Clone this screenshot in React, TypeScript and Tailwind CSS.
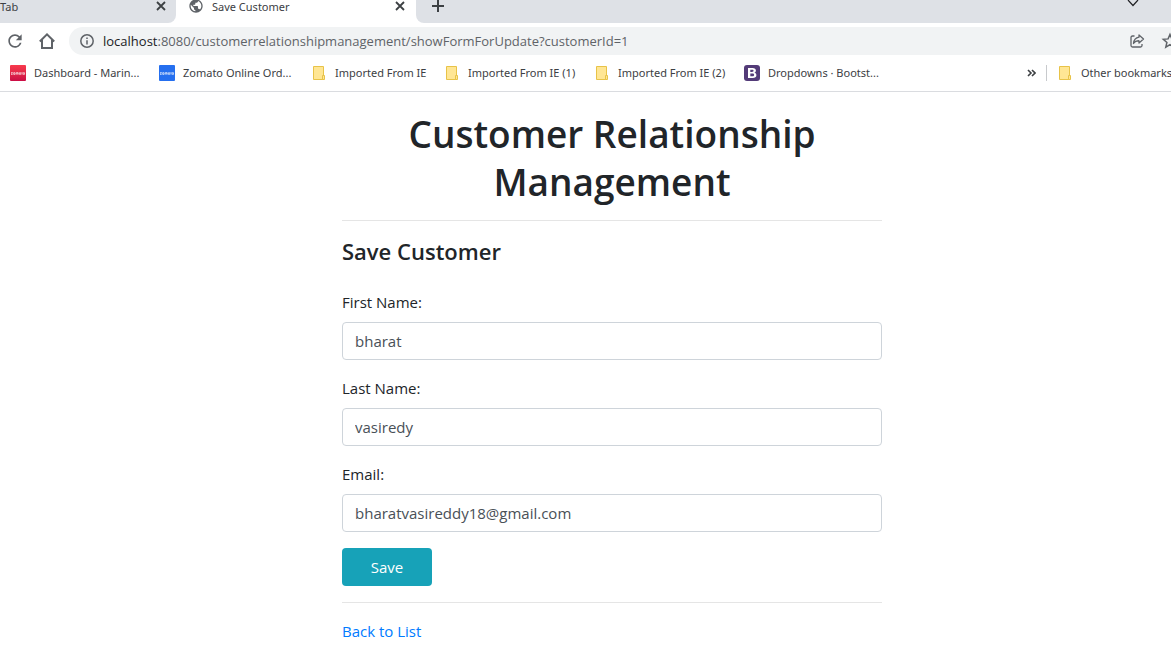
import type { ReactNode } from "react";
import { MdPublic, MdRefresh } from "react-icons/md";

function CloseIcon() {
  return (
    <svg width="10" height="10" viewBox="0 0 10 10" stroke="#3c4043" strokeWidth="1.8" fill="none">
      <path d="M1 1l8 8M9 1L1 9" />
    </svg>
  );
}

function FolderIcon() {
  return (
    <svg width="15" height="16" viewBox="0 0 15 16" fill="#ffe694" stroke="#e8c348" className="shrink-0">
      <path d="M1.5 1.5h10v13h-10z" />
      <path d="M10.5 10.5h2v4h-2z" />
    </svg>
  );
}

function ZomatoIcon({ className }: { className: string }) {
  return (
    <span className={`flex h-4 w-4 items-center justify-center rounded-[1px] ${className}`}>
      <svg width="14" height="3" viewBox="0 0 14 3" fill="none" stroke="#fff" strokeWidth=".7">
        <path
          d="M0 .6h1.600L0 2.400h1.700M2.700.7h1.300v1.700H2.700zM5.200 2.600V.7h2v1.900M6.200.7v1.900M8.400.7h1.300v1.700H8.400zM11 0v2.600M12.200.7h1.300v1.700h-1.300z"
          opacity=".9"
        />
      </svg>
    </span>
  );
}

function BootstrapIcon() {
  return (
    <svg width="16" height="16" viewBox="0 0 16 16">
      <rect width="16" height="16" rx="3" fill="#533b78" />
      <path
        fill="#fff"
        fillRule="evenodd"
        d="M4 3h4.600c2.100 0 3.300 1 3.300 2.600 0 1.100-.6 1.900-1.600 2.200 1.300.2 2.100 1.100 2.100 2.400 0 1.800-1.400 2.800-3.700 2.800H4zm2.300 1.700v2.300h1.700c1.100 0 1.600-.4 1.600-1.150S9.100 4.700 8.100 4.700zm0 3.900v2.600h2c1.200 0 1.800-.5 1.800-1.300s-.6-1.300-1.900-1.300z"
      />
    </svg>
  );
}

function Bookmark({ icon, className, children }: { icon: ReactNode; className: string; children: ReactNode }) {
  return (
    <a href="#" className={`flex shrink-0 items-center gap-2 whitespace-nowrap ${className}`}>
      {icon}
      {children}
    </a>
  );
}

function Field({ id, label, value, type = "text" }: { id: string; label: string; value: string; type?: string }) {
  return (
    <div className="mb-4">
      <label htmlFor={id} className="mb-2 block">
        {label}
      </label>
      <input
        id={id}
        type={type}
        defaultValue={value}
        className="block h-[38px] w-full rounded border border-[#ced4da] bg-white px-3 text-[#495057] outline-none"
      />
    </div>
  );
}

function BrowserChrome() {
  return (
    <header className="overflow-hidden border-b border-[#dadce0] font-['Noto_Sans','Open_Sans',sans-serif] text-[11px] leading-[14px] text-[#3c4043]">
      <div className="flex h-[23px]">
        <div className="flex w-44 shrink-0 items-start justify-between rounded-br-lg bg-[#dee1e6] pr-2.5">
          <span>Tab</span>
          <button aria-label="Close Tab" className="mt-px">
            <CloseIcon />
          </button>
        </div>
        <div className="flex w-60 shrink-0 items-start pr-[11px] pl-3">
          <MdPublic size={16} color="#5f6368" className="-mt-0.5 mr-2" />
          <span className="grow">Save Customer</span>
          <button aria-label="Close Save Customer" className="mt-px">
            <CloseIcon />
          </button>
        </div>
        <div className="flex grow items-start justify-between rounded-bl-lg bg-[#dee1e6] pr-8 pl-4">
          <button aria-label="New tab">
            <svg width="12" height="12" viewBox="0 0 12 12" stroke="#3c4043" strokeWidth="2" fill="none">
              <path d="M6 0v12M0 6h12" />
            </svg>
          </button>
          <button aria-label="Search tabs">
            <svg width="12" height="7" viewBox="0 0 12 7" stroke="#202124" strokeWidth="1.2" fill="none">
              <path d="M1 0l5 5.500L11 0" />
            </svg>
          </button>
        </div>
      </div>

      <div className="flex items-center pt-1 pl-[5px]">
        <button aria-label="Reload">
          <MdRefresh size={20} color="#5f6368" />
        </button>
        <button aria-label="Home" className="ml-3.5">
          <svg width="16" height="16" viewBox="0 0 16 16" stroke="#5f6368" strokeWidth="2" fill="none">
            <path d="M0.800 8.500L8 1.400l7.200 7.100M3 7v8h10V7" />
          </svg>
        </button>
        <div className="ml-3.5 flex h-7 grow items-center rounded-l-full bg-[#f1f3f4] pl-2.5">
          <svg width="16" height="16" viewBox="0 0 16 16" stroke="#5f6368" strokeWidth="1.500" fill="none">
            <circle cx="8" cy="8" r="6.200" />
            <path d="M8 7.200v4.200M8 4.500v1.500" />
          </svg>
          <span className="ml-2 grow font-['Open_Sans','Noto_Sans',sans-serif] text-[13px] leading-5 whitespace-nowrap text-[#5f6368]">
            <span className="text-[#202124]">localhost</span>
            :8080/customerrelationshipmanagement/showFormForUpdate?customerId=1
          </span>
          <button aria-label="Share" className="shrink-0">
            <svg width="16" height="16" viewBox="0 0 16 16" stroke="#5f6368" strokeWidth="1.300" fill="none">
              <path d="M5.500 3H3.500Q2 3 2 4.500v8Q2 14 3.500 14h8q1.500 0 1.500-1.500V11" />
              <path d="M10 2l4.500 4L10 10V7.800Q6.500 7.500 4.500 10.500 5 5 10 4.200z" strokeLinejoin="round" />
            </svg>
          </button>
          <button aria-label="Bookmark this page" className="-mr-2 ml-4 shrink-0">
            <svg width="18" height="18" viewBox="0 0 18 18" stroke="#5f6368" strokeWidth="1.500" fill="none">
              <path d="M9 2.500l1.900 4.400 4.800.4-3.600 3.200 1.100 4.700L9 12.700l-4.200 2.500 1.100-4.700L2.300 7.300l4.800-.4z" />
            </svg>
          </button>
        </div>
      </div>

      <nav aria-label="Bookmarks" className="flex h-9 items-center pl-2.5">
        <Bookmark className="w-[149px]" icon={<ZomatoIcon className="bg-linear-to-b from-[#f83a4c] to-[#cb0c45]" />}>
          Dashboard - Marin...
        </Bookmark>
        <Bookmark className="w-[153px]" icon={<ZomatoIcon className="bg-[#256fef]" />}>
          Zomato Online Ord...
        </Bookmark>
        <Bookmark className="w-[133px]" icon={<FolderIcon />}>
          Imported From IE
        </Bookmark>
        <Bookmark className="w-[150px]" icon={<FolderIcon />}>
          Imported From IE (1)
        </Bookmark>
        <Bookmark className="w-[149px]" icon={<FolderIcon />}>
          Imported From IE (2)
        </Bookmark>
        <Bookmark className="grow" icon={<BootstrapIcon />}>
          Dropdowns · Bootst...
        </Bookmark>
        <button aria-label="More bookmarks" className="mr-2.5">
          <svg width="9" height="8" viewBox="0 0 9 8" stroke="#3c4043" strokeWidth="1.600" fill="none">
            <path d="M1 1l3 3-3 3M5 1l3 3-3 3" />
          </svg>
        </button>
        <span className="mr-[11px] h-4 w-px bg-[#c8cacd]" />
        <Bookmark className="w-[113px]" icon={<FolderIcon />}>
          Other bookmarks
        </Bookmark>
      </nav>
    </header>
  );
}

export default function App() {
  return (
    <div className="min-h-screen overflow-x-hidden bg-white font-['Open_Sans','Noto_Sans',sans-serif]">
      <BrowserChrome />
      <div className="grid grid-cols-[342fr_540fr_289fr] text-[15px] leading-6 text-[#212529]">
        <main className="col-start-2 min-w-0 py-4">
          <h1 className="pt-0.5 text-center text-[37px] leading-12 font-semibold">
            Customer Relationship Management
          </h1>
          <hr className="mt-3.5 mb-4 border-[#e5e5e5]" />
          <h2 className="mb-6 text-[22px] leading-[29px] font-semibold">Save Customer</h2>
          <form onSubmit={(event) => event.preventDefault()}>
            <Field id="firstName" label="First Name:" value="bharat" />
            <Field id="lastName" label="Last Name:" value="vasiredy" />
            <Field id="email" label="Email:" type="email" value="bharatvasireddy18@gmail.com" />
            <button type="submit" className="block h-[38px] w-[90px] rounded bg-[#17a2b8] text-white">
              Save
            </button>
          </form>
          <hr className="my-4 border-[#e5e5e5]" />
          <a href="#" className="text-[#007bff]">
            Back to List
          </a>
        </main>
      </div>
    </div>
  );
}
